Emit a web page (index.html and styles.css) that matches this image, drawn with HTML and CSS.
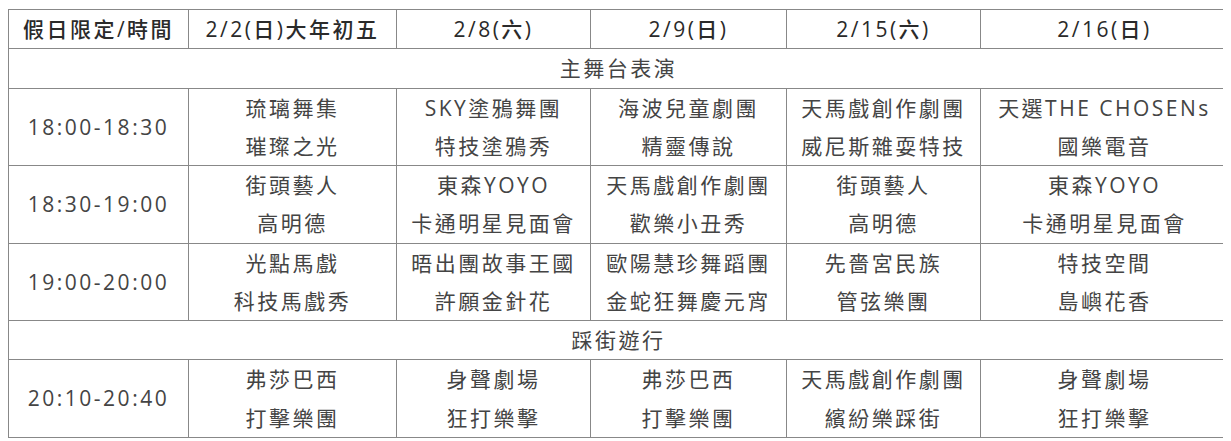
FILE: index.html
```html
<!DOCTYPE html>
<html lang="zh-Hant">
<head>
<meta charset="utf-8">
<title>假日限定表演時間</title>
<link rel="stylesheet" href="styles.css">
</head>
<body>
<table class="schedule">
  <colgroup>
    <col class="c-time">
    <col class="c-d1">
    <col class="c-d2">
    <col class="c-d3">
    <col class="c-d4">
    <col class="c-d5">
  </colgroup>
  <thead>
    <tr>
      <th>假日限定/時間</th>
      <th>2/2(日)大年初五</th>
      <th>2/8(六)</th>
      <th>2/9(日)</th>
      <th>2/15(六)</th>
      <th>2/16(日)</th>
    </tr>
  </thead>
  <tbody>
    <tr><td class="section" colspan="6">主舞台表演</td></tr>
    <tr>
      <td>18:00-18:30</td>
      <td>琉璃舞集<br>璀璨之光</td>
      <td>SKY塗鴉舞團<br>特技塗鴉秀</td>
      <td>海波兒童劇團<br>精靈傳說</td>
      <td>天馬戲創作劇團<br>威尼斯雜耍特技</td>
      <td>天選THE CHOSENs<br>國樂電音</td>
    </tr>
    <tr>
      <td>18:30-19:00</td>
      <td>街頭藝人<br>高明德</td>
      <td>東森YOYO<br>卡通明星見面會</td>
      <td>天馬戲創作劇團<br>歡樂小丑秀</td>
      <td>街頭藝人<br>高明德</td>
      <td>東森YOYO<br>卡通明星見面會</td>
    </tr>
    <tr>
      <td>19:00-20:00</td>
      <td>光點馬戲<br>科技馬戲秀</td>
      <td>晤出團故事王國<br>許願金針花</td>
      <td>歐陽慧珍舞蹈團<br>金蛇狂舞慶元宵</td>
      <td>先嗇宮民族<br>管弦樂團</td>
      <td>特技空間<br>島嶼花香</td>
    </tr>
    <tr><td class="section" colspan="6">踩街遊行</td></tr>
    <tr>
      <td>20:10-20:40</td>
      <td>弗莎巴西<br>打擊樂團</td>
      <td>身聲劇場<br>狂打樂擊</td>
      <td>弗莎巴西<br>打擊樂團</td>
      <td>天馬戲創作劇團<br>繽紛樂踩街</td>
      <td>身聲劇場<br>狂打樂擊</td>
    </tr>
  </tbody>
</table>
</body>
</html>
```
FILE: styles.css
```css
html, body {
  background: #ffffff;
}
body {
  margin: 9px 8px 8px 8px;
}
.schedule {
  border-collapse: collapse;
  table-layout: fixed;
  width: 1220px;
  font-family: "Open Sans", "Noto Sans CJK TC", sans-serif;
  font-size: 21px;
  letter-spacing: 2.5px;
  color: #444;
}
.c-time { width: 180px; }
.c-d1 { width: 208px; }
.c-d2 { width: 194px; }
.c-d3 { width: 196px; }
.c-d4 { width: 194px; }
.c-d5 { width: 248px; }
.schedule th,
.schedule td {
  border: 1px solid #888;
  padding: 0;
  text-align: center;
  vertical-align: middle;
  line-height: 38.25px;
  white-space: nowrap;
}
.schedule th {
  font-weight: 500;
  color: #2a2a2a;
}
```
